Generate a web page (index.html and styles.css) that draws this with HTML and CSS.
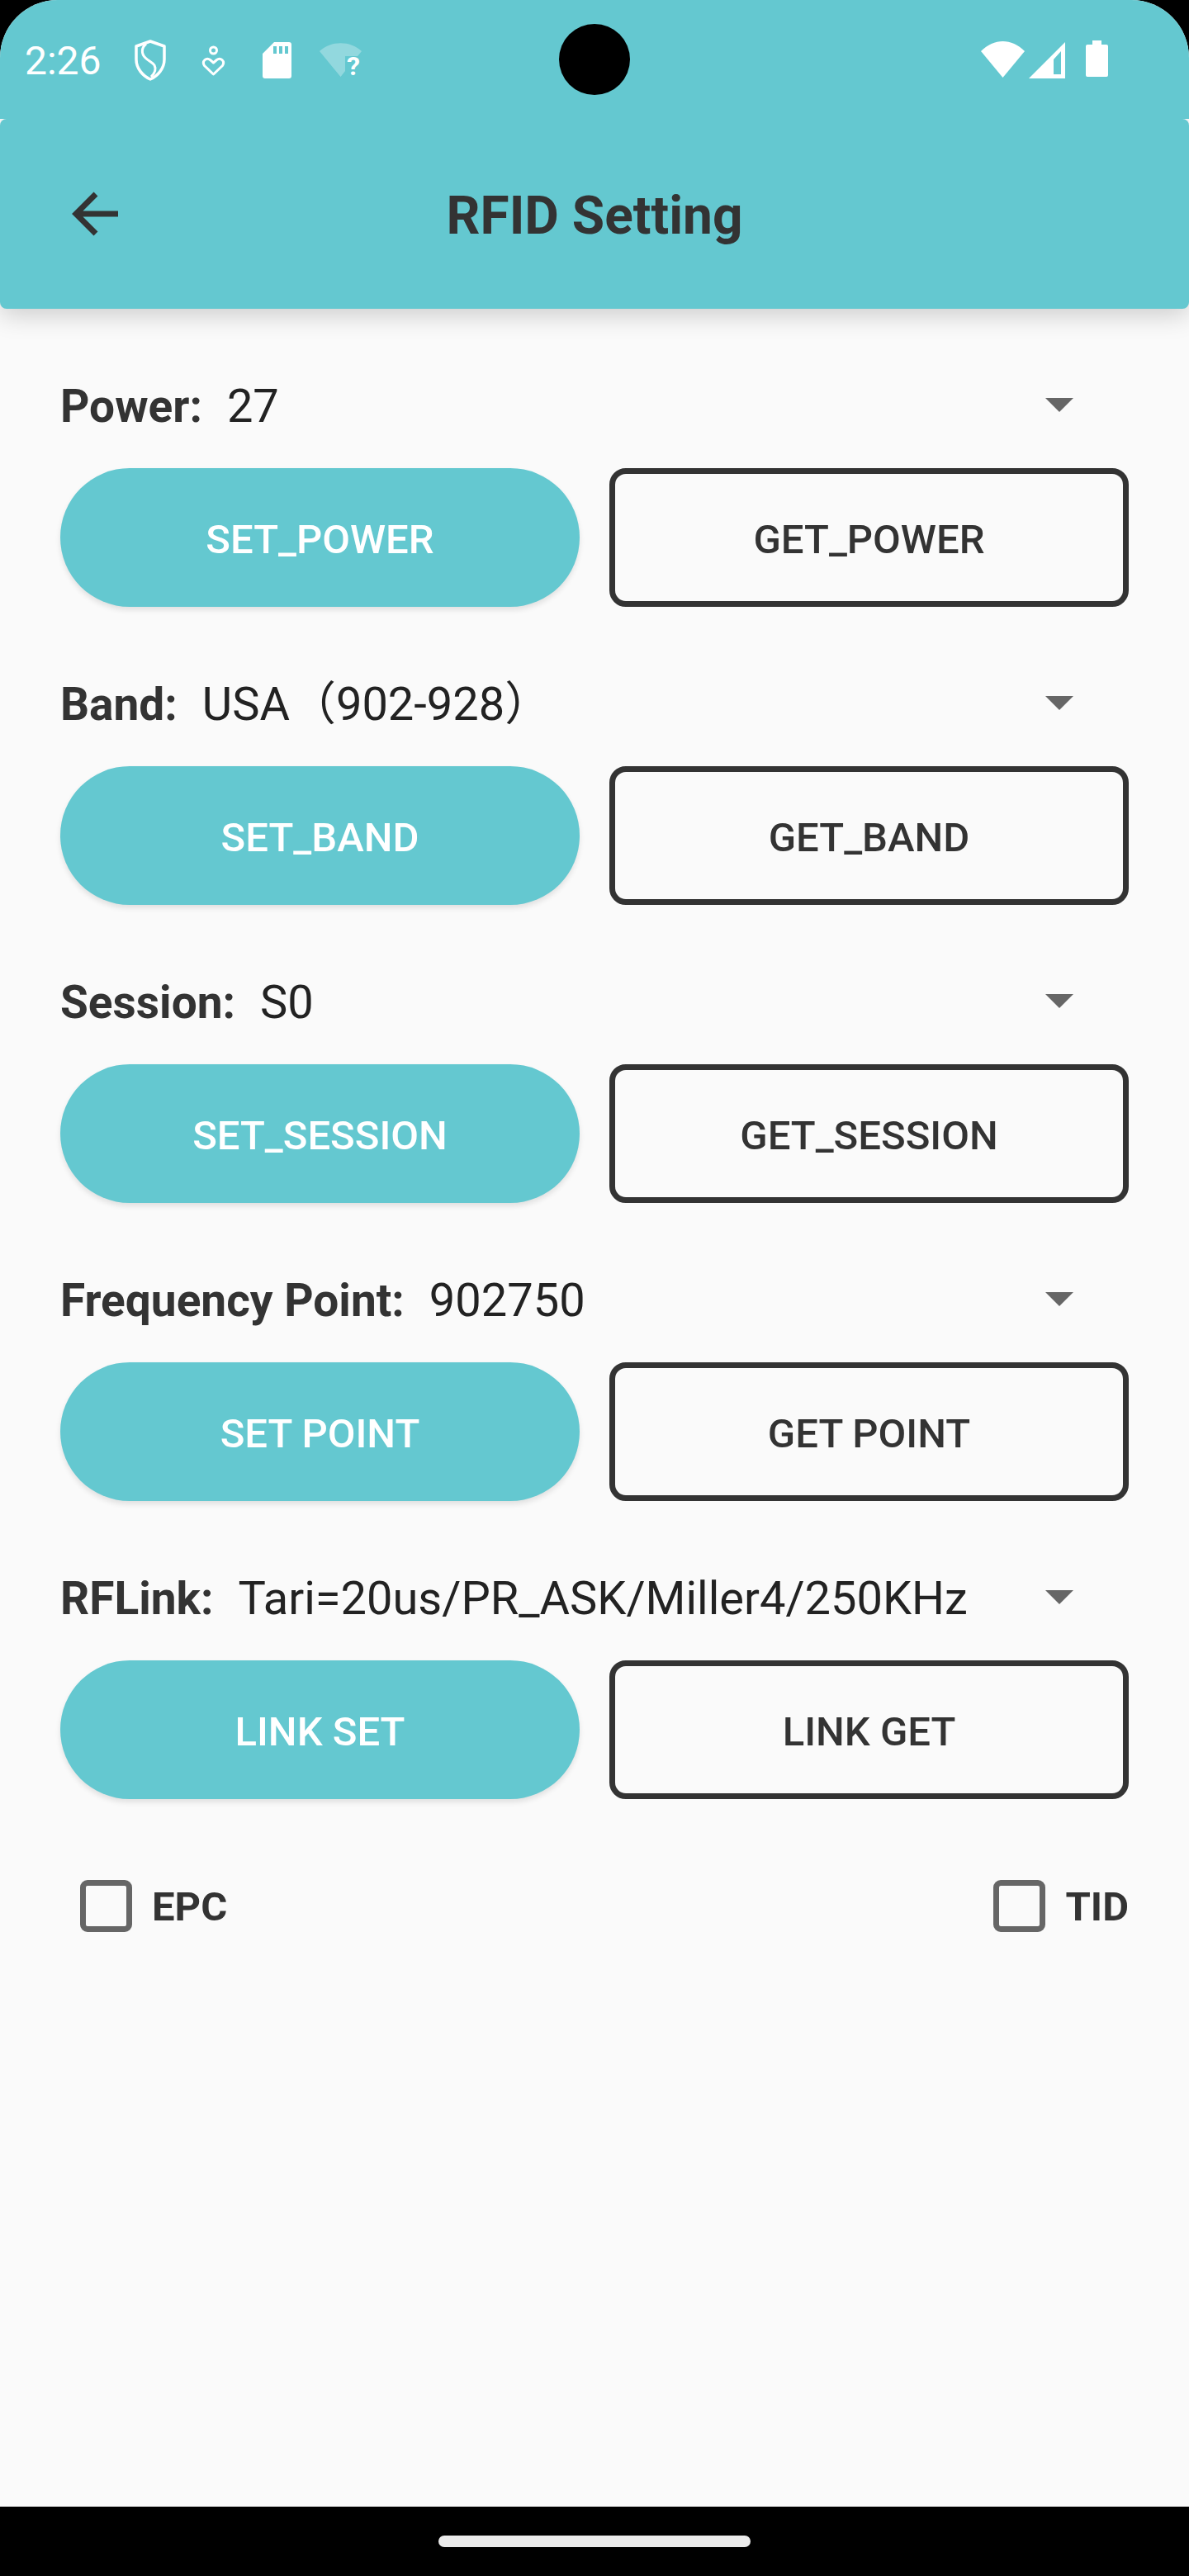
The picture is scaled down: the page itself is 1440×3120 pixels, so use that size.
FILE: index.html
```html
<!DOCTYPE html>
<html lang="en">
<head>
<meta charset="utf-8">
<title>RFID Setting</title>
<link rel="stylesheet" href="styles.css">
</head>
<body>
<div class="screen">
  <header class="status">
    <div class="status-left">
      <span class="time">2:26</span>
      <svg class="ic-shield" viewBox="0 0 40 50"><path d="M20 2 L37 8 V24 C37 35 29 44 20 48 C11 44 3 35 3 24 V8 Z" fill="none" stroke="#fff" stroke-width="3.5" stroke-linejoin="round"/><path d="M15 5 C9 10 9 17 14 22 C18 26 23 28 25 31 C27 35 26 40 21 45" fill="none" stroke="#fff" stroke-width="3"/></svg>
      <svg class="ic-person" viewBox="0 0 27 38"><circle cx="13.500" cy="7" r="4" fill="none" stroke="#fff" stroke-width="3"/><path d="M13.500 36 L2.500 25.500 C-1 20 5 15 9.500 18.500 L13.500 22 L17.500 18.500 C22 15 28 20 24.500 25.500 Z" fill="none" stroke="#fff" stroke-width="3" stroke-linejoin="round"/></svg>
      <svg class="ic-sd" viewBox="0 0 35 44"><path fill-rule="evenodd" d="M14 0 H32 Q35 0 35 3 V41 Q35 44 32 44 H3 Q0 44 0 41 V14 Z M13 5 V14 H17 V5 Z M20 5 V14 H24 V5 Z M27 5 V14 H31 V5 Z" fill="#fff"/></svg>
      <svg class="ic-wifi-q" viewBox="0 0 51 41"><path d="M0 10 C14 -3 37 -3 51 10 L46 16 H31 V34 L25.500 41 Z" fill="#fff" fill-opacity=".3"/><text x="33" y="39" class="q">?</text></svg>
    </div>
    <div class="status-right">
      <svg class="ic-wifi" viewBox="0 0 53 44"><path d="M0 12 C16 -4 37 -4 53 12 L26.500 44 Z" fill="#fff"/></svg>
      <svg class="ic-signal" viewBox="0 0 44 44"><path fill-rule="evenodd" d="M44 0 V44 H0 Z M39 11 L30 21 V39 H39 Z" fill="#fff"/></svg>
      <svg class="ic-battery" viewBox="0 0 27 44"><path d="M8 0 H19 V5 H25 Q27 5 27 7 V42 Q27 44 25 44 H2 Q0 44 0 42 V7 Q0 5 2 5 H8 Z" fill="#fff"/></svg>
    </div>
    <div class="camera"></div>
  </header>
  <div class="appbar">
    <svg class="back" viewBox="0 0 56 54"><path d="M56 27 H5 M29 3 L5 27 L29 51" fill="none" stroke="#333" stroke-width="7"/></svg>
    <h1 class="title">RFID Setting</h1>
  </div>
  <main class="content">
    <section class="group">
      <div class="field"><span class="label">Power:</span><span class="value">27</span><i class="caret"></i></div>
      <div class="buttons"><button class="btn fill">SET_POWER</button><button class="btn line">GET_POWER</button></div>
    </section>
    <section class="group">
      <div class="field"><span class="label">Band:</span><span class="value">USA（902-928）</span><i class="caret"></i></div>
      <div class="buttons"><button class="btn fill">SET_BAND</button><button class="btn line">GET_BAND</button></div>
    </section>
    <section class="group">
      <div class="field"><span class="label">Session:</span><span class="value">S0</span><i class="caret"></i></div>
      <div class="buttons"><button class="btn fill">SET_SESSION</button><button class="btn line">GET_SESSION</button></div>
    </section>
    <section class="group">
      <div class="field"><span class="label">Frequency Point:</span><span class="value">902750</span><i class="caret"></i></div>
      <div class="buttons"><button class="btn fill">SET POINT</button><button class="btn line">GET POINT</button></div>
    </section>
    <section class="group">
      <div class="field"><span class="label">RFLink:</span><span class="value">Tari=20us/PR_ASK/Miller4/250KHz</span><i class="caret"></i></div>
      <div class="buttons"><button class="btn fill">LINK SET</button><button class="btn line">LINK GET</button></div>
    </section>
    <div class="checks">
      <label class="check"><span class="box"></span>EPC</label>
      <label class="check"><span class="box"></span>TID</label>
    </div>
  </main>
  <footer class="nav"><div class="pill"></div></footer>
</div>
</body>
</html>
```
FILE: styles.css
```css
* { box-sizing: border-box; }
html, body { margin: 0; padding: 0; background: #000; }
body { font-family: Roboto, "Noto Sans CJK SC", sans-serif; color: #333; }
.screen { width: 1440px; height: 3120px; display: flex; flex-direction: column; background: #fafafa; border-radius: 70px 70px 0 0; }
.status { position: relative; z-index: 2; height: 144px; flex: none; background: #64c8d0; border-radius: 70px 70px 0 0; display: flex; justify-content: space-between; padding: 48px 98px 0 30px; }
.status-left, .status-right { display: flex; align-items: flex-start; }
.time { font-size: 48px; line-height: 49px; color: #fff; margin-top: 1px; width: 132px; }
.ic-shield { width: 40px; height: 50px; margin-right: 43px; }
.ic-person { width: 27px; height: 38px; margin: 6px 46px 0 0; overflow: visible; }
.ic-sd { width: 35px; height: 44px; margin: 3px 34px 0 0; }
.ic-wifi-q { width: 51px; height: 41px; margin-top: 4px; overflow: visible; }
.q { font: 700 32px Roboto, sans-serif; fill: #fff; }
.ic-wifi { width: 53px; height: 44px; margin: 2px 5px 0 0; }
.ic-signal { width: 44px; height: 44px; margin: 3px 25px 0 0; }
.ic-battery { width: 27px; height: 44px; margin-top: 1px; }
.camera { position: absolute; left: 677px; top: 29px; width: 86px; height: 86px; border-radius: 50%; background: #000; }
.appbar { position: relative; z-index: 1; flex: none; height: 230px; background: #64c8d0; border-radius: 8px; box-shadow: 0 8px 30px rgba(0,0,0,.18); display: flex; align-items: center; justify-content: center; padding-top: 6px; }
.back { position: absolute; left: 87px; top: 88px; width: 56px; height: 54px; }
.title { margin: 0; font-size: 64px; font-weight: 700; line-height: 1; color: #333; }
.content { flex: 1; padding: 85px 73px 0; display: flex; flex-direction: column; gap: 85px; }
.group { display: flex; flex-direction: column; gap: 42px; }
.field { height: 66px; display: flex; align-items: baseline; position: relative; font-size: 56px; line-height: 66px; }
.label { font-weight: 700; font-size: 55px; margin-right: 30px; }
.value { color: #222; }
.caret { position: absolute; right: 67px; top: 23px; width: 0; height: 0; border-left: 17px solid transparent; border-right: 17px solid transparent; border-top: 17px solid #666; }
.buttons { display: grid; grid-template-columns: 1fr 1fr; gap: 36px; }
.btn { height: 168px; font: 500 49px Roboto, sans-serif; padding: 4px 0 0; }
.fill { background: #64c8d0; color: #fff; border: none; border-radius: 84px; box-shadow: 0 4px 6px rgba(0,0,0,.1); }
.line { background: transparent; color: #333; border: 7px solid #333; border-radius: 20px; }
.checks { display: flex; justify-content: space-between; padding-left: 24px; margin-top: 13px; }
.check { display: flex; align-items: flex-start; font-size: 49px; font-weight: 700; line-height: 66px; color: #333; height: 66px; }
.box { width: 63px; height: 63px; border: 7px solid #666; border-radius: 9px; margin-right: 24px; }
.nav { flex: none; height: 84px; background: #000; display: flex; justify-content: center; padding-top: 35px; }
.pill { width: 378px; height: 14px; border-radius: 7px; background: #ebebeb; }
```
